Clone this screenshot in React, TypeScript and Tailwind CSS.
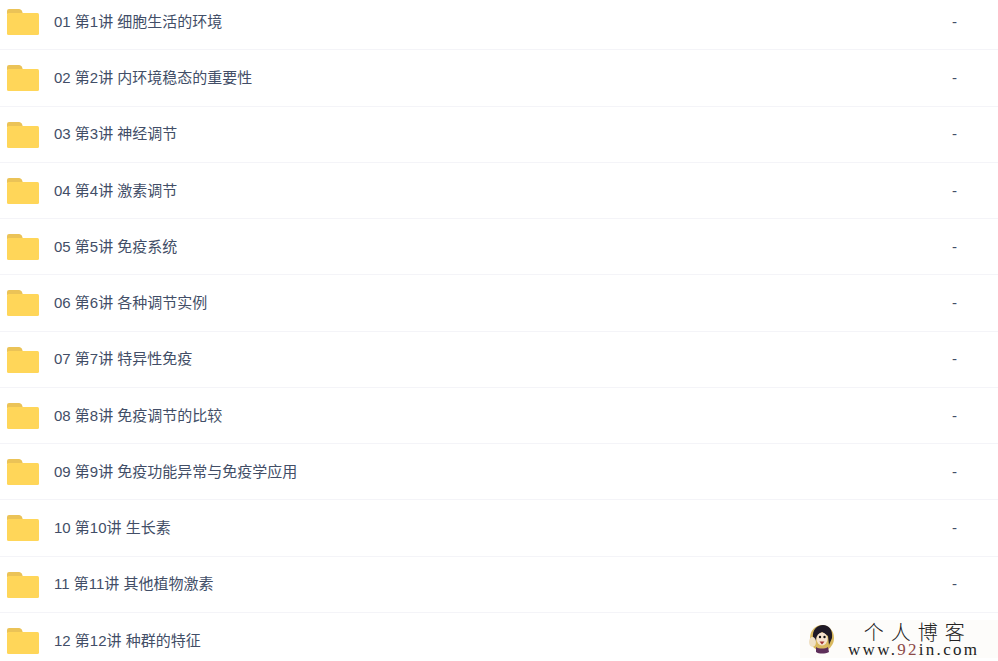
const rows = [
  "01 第1讲 细胞生活的环境",
  "02 第2讲 内环境稳态的重要性",
  "03 第3讲 神经调节",
  "04 第4讲 激素调节",
  "05 第5讲 免疫系统",
  "06 第6讲 各种调节实例",
  "07 第7讲 特异性免疫",
  "08 第8讲 免疫调节的比较",
  "09 第9讲 免疫功能异常与免疫学应用",
  "10 第10讲 生长素",
  "11 第11讲 其他植物激素",
  "12 第12讲 种群的特征",
];

function FolderIcon() {
  return (
    <svg width="32" height="26" viewBox="0 0 32 26" className="mt-[1px] shrink-0">
      <path d="M0 2a2 2 0 0 1 2-2h10c1.500 0 2.500 1 3 2l1 3H0z" fill="#ebc357" />
      <rect x="0" y="4" width="32" height="22" rx="1.500" fill="#ffd659" />
    </svg>
  );
}

function Mascot() {
  return (
    <svg width="28" height="30" viewBox="0 0 28 30" className="shrink-0">
      <ellipse cx="14" cy="14" rx="12" ry="13" fill="#d9b95e" />
      <path d="M5 14C4 6 9 1 15 1s10 5 9 13l-3 7-1-9-6-4-5 4-2 8z" fill="#1f1a26" />
      <ellipse cx="14" cy="15" rx="5.500" ry="6.500" fill="#f5e3cf" />
      <circle cx="12" cy="13" r="1.200" fill="#111" />
      <circle cx="16.500" cy="13" r="1.200" fill="#111" />
      <path d="M11.500 17.500h5l-2.500 3z" fill="#a3302f" />
      <path d="M8 23c3 2 9 2 12 0l1 5c-4 2-10 2-13 0z" fill="#5e2f5a" />
      <ellipse cx="4.500" cy="18" rx="3.500" ry="5" fill="#efe0c4" />
    </svg>
  );
}

export default function App() {
  return (
    <div
      className="relative h-[661px] w-[998px] overflow-hidden bg-white"
      style={{ fontFamily: '"Liberation Sans", "Noto Sans CJK SC", sans-serif' }}
    >
      <ul className="-mt-[6px]">
        {rows.map((name) => (
          <li
            key={name}
            className="flex h-[56.25px] items-center border-b border-[#f4f4f8] pl-[7px]"
          >
            <FolderIcon />
            <span className="ml-[15px] flex-1 pt-[1px] text-[15px] text-[#424e67]">{name}</span>
            <span className="w-[46px] pt-[1px] text-[15px] text-[#424e67]">-</span>
          </li>
        ))}
      </ul>
      <div className="absolute bottom-[3px] right-0 flex h-[38px] w-[198px] items-center bg-[#fdfcfa] pl-[8px]">
        <Mascot />
        <div className="ml-[12px] flex flex-col items-center text-[#222]">
          <span
            className="ml-[8px] h-[20px] text-[20px] font-light leading-[20px] tracking-[7px]"
            style={{ fontFamily: '"Noto Sans CJK SC", serif' }}
          >
            个人博客
          </span>
          <span
            className="h-[15px] text-[17px] leading-[15px] tracking-[2.300px]"
            style={{ fontFamily: '"Liberation Serif", serif' }}
          >
            www.<span className="text-[#8c4a48]">92</span>in.com
          </span>
        </div>
      </div>
    </div>
  );
}
